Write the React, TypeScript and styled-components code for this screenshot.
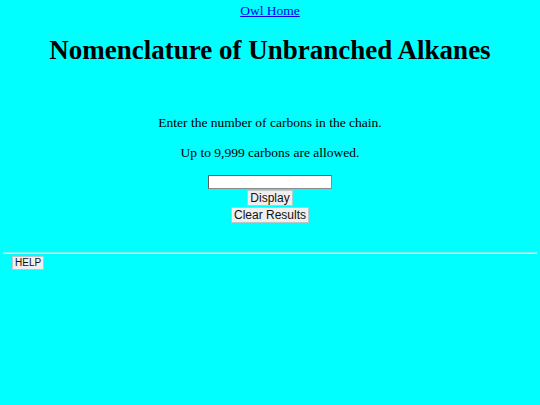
import React from "react";
import styled, { createGlobalStyle } from "styled-components";

const Global = createGlobalStyle`
  html, body { margin: 0; padding: 0; background: #00ffff; }
  body { font-family: "Liberation Serif", "Times New Roman", serif; font-size: 13.5px; color: #000; }
`;

const Page = styled.div`
  display: flex;
  flex-direction: column;
  align-items: center;
  padding-top: 3px;
`;

const HomeLink = styled.a`
  color: #0000ee;
  text-decoration: underline;
  line-height: 16px;
`;

const Title = styled.h1`
  font-size: 27px;
  font-weight: bold;
  margin: 16px 0 0;
  line-height: 31px;
`;

const Para = styled.p<{ $top: number }>`
  margin: ${(p) => p.$top}px 0 0;
  line-height: 16px;
`;

const Form = styled.form`
  display: flex;
  flex-direction: column;
  align-items: center;
  gap: 1px;
  margin-top: 14px;
`;

const TextInput = styled.input`
  box-sizing: border-box;
  width: 124px;
  height: 14px;
  padding: 0 2px;
  border: 1px solid #5f5f5f;
  border-right-color: #8a8a8a;
  border-bottom-color: #8a8a8a;
  background: #fff;
  font-size: 11px;
  outline: none;
`;

const Button = styled.button<{ $size: number }>`
  font-family: "Liberation Sans", Arial, sans-serif;
  font-size: ${(p) => p.$size}px;
  color: #111;
  background: #efefef;
  border: 1px solid #b9c9c9;
  border-radius: 0;
  margin: 0;
  padding: 0 2px;
  line-height: ${(p) => p.$size + 2}px;
  cursor: default;
`;

const Rule = styled.hr`
  align-self: stretch;
  margin: 29px 3px 0;
  border: none;
  border-top: 1px solid #8ae8e8;
  border-bottom: 1px solid #a6fafa;
`;

const HelpRow = styled.div`
  align-self: stretch;
  display: flex;
  padding: 2px 12px;
`;

export default function App() {
  return (
    <>
      <Global />
      <Page>
        <HomeLink href="#">Owl Home</HomeLink>
        <Title>Nomenclature of Unbranched Alkanes</Title>
        <Para $top={49}>Enter the number of carbons in the chain.</Para>
        <Para $top={14}>Up to 9,999 carbons are allowed.</Para>
        <Form onSubmit={(e) => e.preventDefault()}>
          <TextInput type="text" />
          <Button type="submit" $size={12}>Display</Button>
          <Button type="reset" $size={12}>Clear Results</Button>
        </Form>
        <Rule />
        <HelpRow>
          <Button type="button" $size={10}>HELP</Button>
        </HelpRow>
      </Page>
    </>
  );
}
